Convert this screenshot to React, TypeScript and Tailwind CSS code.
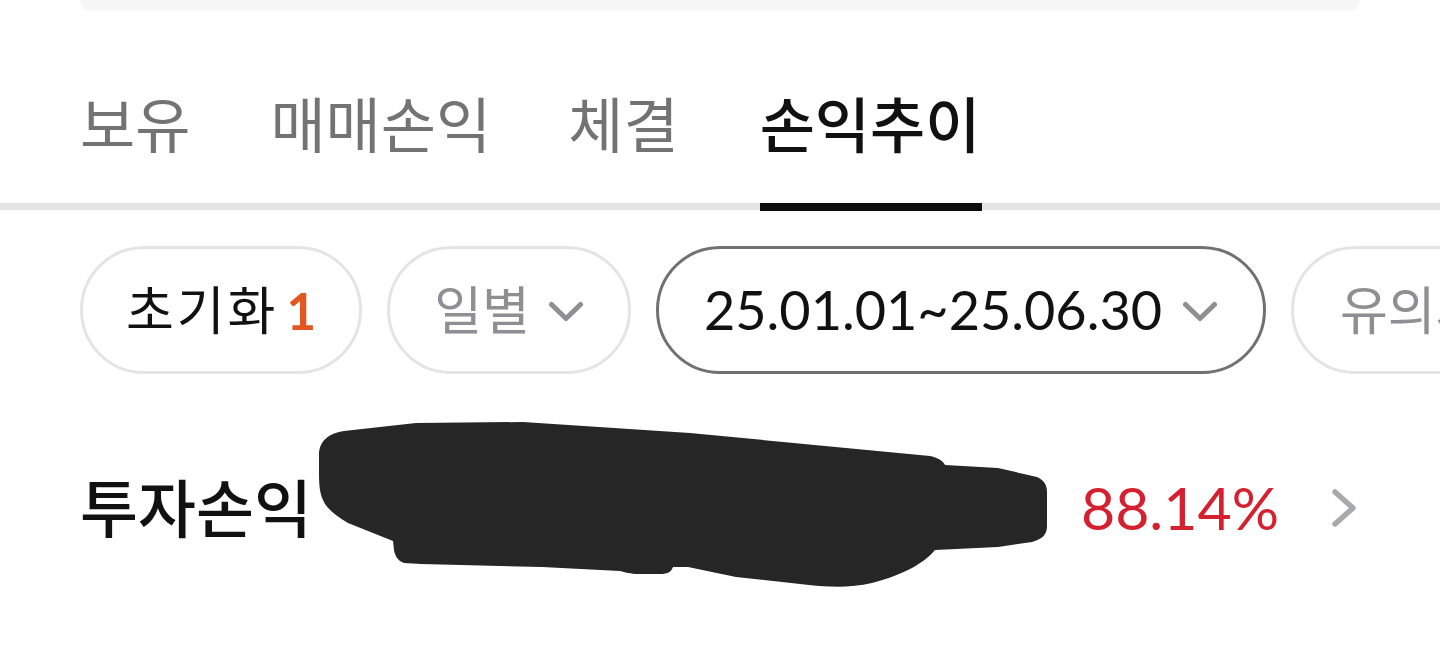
import React from "react";

const ChevronDown = ({ color }: { color: string }) => (
  <svg width="36" height="22" viewBox="0 0 36 22" fill="none">
    <path d="M3.5 3.5 L18 17.5 L32.5 3.5" stroke={color} strokeWidth="5" strokeLinecap="round" strokeLinejoin="round" />
  </svg>
);

const ChevronRight = () => (
  <svg width="30" height="40" viewBox="0 0 30 40" fill="none">
    <path d="M5 4 L23 20 L5 36" stroke="#a8a9ab" strokeWidth="5.5" strokeLinecap="round" strokeLinejoin="round" />
  </svg>
);

const Redaction = () => (
  <svg
    className="absolute left-0 top-0 pointer-events-none"
    width="1440"
    height="666"
    viewBox="0 0 1440 666"
  >
    <path
      d="M319 455 C319 440 330 433 344 431 L416 423 L523 422 L690 433 L930 456 C939 458 943 461 945 465 L998 468 L1037 477 C1044 480 1047 485 1047 492 L1047 526 C1047 534 1043 539 1032 542 L998 547 L935 550 C925 562 906 574 872 583 C850 588 830 587 809 585 L736 577 L688 567 L673 567 C671 572 668 574 660 574 L639 574 C630 574 625 572 620 571 L542 567 L421 564 L404 563 C398 561 395 556 394 550 L393 541 L348 523 C335 515 326 508 323 500 C319 492 319 480 319 470 Z"
      fill="#262626"
    />
  </svg>
);

export default function App() {
  const tabs = [
    { t: "보유", m: "ml-0" },
    { t: "매매손익", m: "ml-[80px]" },
    { t: "체결", m: "ml-[77px]" },
    { t: "손익추이", m: "ml-[81px]" },
  ];
  return (
    <div
      className="relative w-[1440px] h-[666px] overflow-hidden bg-white"
      style={{ fontFamily: 'Lato, "Noto Sans CJK KR", "Noto Sans", sans-serif' }}
    >
      <div className="mx-[80px] h-[11px] bg-[#f7f7f7] rounded-b-[14px]" />

      {/* Tabs */}
      <div className="flex px-[80px] h-[199px] border-b-[7px] border-[#e4e4e5]">
        {tabs.map(({ t, m }, i) => (
          <div key={t} className={"relative flex items-center h-[192px] pt-[36px] " + m}>
            <span
              className={
                "text-[60px] leading-[72px] " +
                (i === 3 ? "text-[#111111] font-medium" : "text-[#737373]")
              }
            >
              {t}
            </span>
            {i === 3 && <span className="absolute left-0 -right-[2px] top-full h-[8px] bg-[#0d0d0d]" />}
          </div>
        ))}
      </div>

      {/* Chips */}
      <div className="flex gap-[25px] pl-[80px] mt-[36px] whitespace-nowrap">
        <div className="flex items-center justify-center w-[282px] h-[128px] rounded-full border-[3px] border-[#e4e4e5] shrink-0">
          <span className="text-[52px] leading-none tracking-[3px] text-[#111111]">초기화</span>
          <span className="text-[51px] leading-none text-[#e2561f] font-bold ml-[8px]">1</span>
        </div>
        <div className="flex items-center justify-center w-[244px] h-[128px] rounded-full border-[3px] border-[#e4e4e5] shrink-0">
          <span className="text-[52px] leading-none text-[#8e8e93]">일별</span>
          <span className="ml-[18px] mt-[4px]"><ChevronDown color="#8e8e93" /></span>
        </div>
        <div className="flex items-center justify-center w-[610px] h-[128px] rounded-full border-[3px] border-[#717171] shrink-0">
          <span className="text-[54px] leading-none text-[#111111]">25.01.01~25.06.30</span>
          <span className="ml-[20px] mt-[4px]"><ChevronDown color="#8e8e93" /></span>
        </div>
        <div className="flex items-center h-[128px] pl-[46px] pr-[46px] rounded-full border-[3px] border-[#e4e4e5] shrink-0">
          <span className="text-[52px] leading-none text-[#8e8e93]">유의사항</span>
          <span className="ml-[18px] mt-[4px]"><ChevronDown color="#8e8e93" /></span>
        </div>
      </div>

      {/* Profit row */}
      <div className="flex items-center justify-between pl-[80px] pr-[80px] mt-[93px] h-[80px]">
        <span className="text-[63px] leading-none font-medium text-[#111111]">투자손익</span>
        <div className="flex items-center">
          <span className="text-[59px] leading-none text-[#d5202f]">88.14%</span>
          <span className="ml-[51px] mt-[2px]"><ChevronRight /></span>
        </div>
      </div>

      <Redaction />
    </div>
  );
}
